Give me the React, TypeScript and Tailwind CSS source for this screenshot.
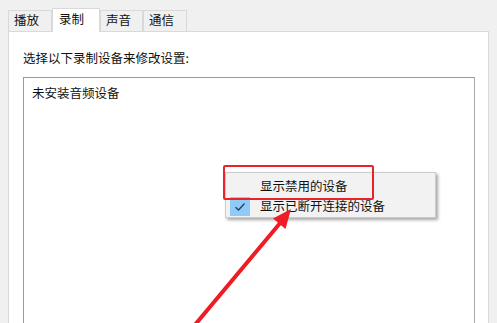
const font = { fontFamily: '"Microsoft YaHei", "Noto Sans CJK SC", sans-serif' }

const Tab = ({ label, active }: { label: string; active?: boolean }) => {
  if (active) {
    return (
      <div className="relative z-10 -mb-px flex h-[24px] w-[48px] items-start border border-b-0 border-[#d9d9d9] bg-white pl-[6px] pt-[2px]">
        {label}
      </div>
    )
  }
  return (
    <div className="flex h-[21px] items-start border border-b-0 border-[#d9d9d9] bg-[#f0f0f0] px-[5px] pt-[1px]">
      {label}
    </div>
  )
}

export default function App() {
  return (
    <div
      className="relative h-[323px] w-[497px] overflow-hidden bg-[#f0f0f0] text-[12.5px] leading-[16px] text-[#111]"
      style={font}
    >
      <div className="flex h-[31px] items-end pl-[8px]">
        <div className="w-[44px]">
          <Tab label="播放" />
        </div>
        <Tab label="录制" active />
        <div className="w-[43px]">
          <Tab label="声音" />
        </div>
        <div className="w-[44px]">
          <Tab label="通信" />
        </div>
      </div>

      <div className="ml-[8px] h-[300px] w-[481px] border border-[#d9d9d9] bg-white pl-[14px] pt-[18px]">
        <p>选择以下录制设备来修改设置:</p>
        <div className="mt-[11px] h-[260px] w-[452px] border border-[#a8a8a8] border-l-[#9a9a9a] border-t-[#9a9a9a] px-[8px] pt-[7px]">
          未安装音频设备
        </div>
      </div>

      {/* context menu */}
      <div className="absolute left-[225px] top-[172px] w-[211px] border border-[#cccccc] bg-[#f2f2f2] pb-[1px] pt-[3px] shadow-[2px_2px_3px_rgba(0,0,0,0.35)]">
        <div className="flex h-[20px] items-center pl-[34px]">显示禁用的设备</div>
        <div className="relative flex h-[20px] items-center pl-[34px]">
          <div className="absolute left-[4px] top-[1px] flex h-[19px] w-[20px] items-center justify-center bg-[#91c9f7]">
            <svg width="12" height="10" viewBox="0 0 12 10">
              <path d="M1.5 5.2 L4.5 8 L10.5 1.5" fill="none" stroke="#1e3f66" strokeWidth="1.3" />
            </svg>
          </div>
          显示已断开连接的设备
        </div>
      </div>

      {/* annotation */}
      <div className="absolute left-[223px] top-[165px] h-[35px] w-[151px] rounded-[2px] border-2 border-[#e8232b]" />
      <svg className="absolute left-0 top-0" width="497" height="323" viewBox="0 0 497 323">
        <line x1="194" y1="326" x2="281" y2="222" stroke="#ee1c25" strokeWidth="4" strokeLinecap="round" />
        <polygon points="291,209 285.5,229 273,218.5" fill="#ee1c25" />
      </svg>
    </div>
  )
}
